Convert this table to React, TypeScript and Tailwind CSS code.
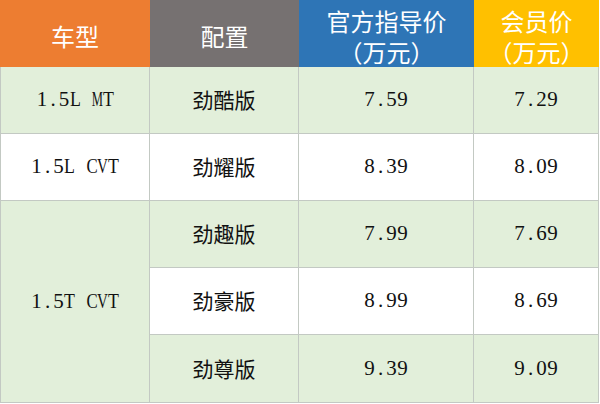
import React from 'react'

const cjk = { fontFamily: '"Noto Sans CJK SC", "Noto Sans", sans-serif' }
const serif = { fontFamily: '"Liberation Serif", "Noto Sans CJK SC", serif' }

// SimSun-like half-width letters: every character gets the same slot,
// wide capitals are squeezed to fit it
const squeeze: Record<string, string> = {
  M: 'scale-x-[0.6]',
  V: 'scale-x-[0.72]',
  C: 'scale-x-[0.8]',
  T: 'scale-x-[0.85]',
  L: 'scale-x-[0.85]',
}

function Mono({ text }: { text: string }) {
  return (
    <span className="flex text-[21px] text-[#111]" style={serif}>
      {text.split('').map((ch, i) => (
        <span key={i} className="flex w-[11px] justify-center">
          <span className={`inline-block ${squeeze[ch] ?? ''}`}>{ch === ' ' ? '\u00a0' : ch}</span>
        </span>
      ))}
    </span>
  )
}

const cell = 'flex items-center justify-center border-b border-r border-[#c3c9c3]'
const green = 'bg-[#e2efda]'

interface Row {
  trim: string
  guide: string
  member: string
  bg: string
}

const rows: Row[] = [
  { trim: '劲趣版', guide: '7.99', member: '7.69', bg: green },
  { trim: '劲豪版', guide: '8.99', member: '8.69', bg: 'bg-white' },
  { trim: '劲尊版', guide: '9.39', member: '9.09', bg: green },
]

export default function App() {
  return (
    <div className="h-[404px] w-[600px] bg-white">
      <div className="grid grid-cols-[150px_149px_175px_125px] grid-rows-[67px_67px_67px_67px_67px_68px]">
        <div className="flex items-center justify-center bg-[#ed7d31] pt-1 text-[24px] text-white" style={cjk}>
          车型
        </div>
        <div className="flex items-center justify-center bg-[#767171] pt-1 text-[24px] text-white" style={cjk}>
          配置
        </div>
        <div className="flex flex-col items-center justify-center bg-[#2e75b6] pt-1 text-[24px] leading-[31px] text-white" style={cjk}>
          <span>官方指导价</span>
          <span>（万元）</span>
        </div>
        <div className="flex flex-col items-center justify-center bg-[#ffc000] pt-1 text-[24px] leading-[31px] text-white" style={cjk}>
          <span>会员价</span>
          <span>（万元）</span>
        </div>

        <div className={`${cell} ${green} border-l`}>
          <Mono text="1.5L MT" />
        </div>
        <div className={`${cell} ${green} text-[21px] text-[#111]`} style={cjk}>
          劲酷版
        </div>
        <div className={`${cell} ${green}`}>
          <Mono text="7.59" />
        </div>
        <div className={`${cell} ${green}`}>
          <Mono text="7.29" />
        </div>

        <div className={`${cell} bg-white border-l`}>
          <Mono text="1.5L CVT" />
        </div>
        <div className={`${cell} bg-white text-[21px] text-[#111]`} style={cjk}>
          劲耀版
        </div>
        <div className={`${cell} bg-white`}>
          <Mono text="8.39" />
        </div>
        <div className={`${cell} bg-white`}>
          <Mono text="8.09" />
        </div>

        <div className={`${cell} ${green} row-span-3 border-l`}>
          <Mono text="1.5T CVT" />
        </div>
        {rows.map((r) => (
          <React.Fragment key={r.trim}>
            <div className={`${cell} ${r.bg} text-[21px] text-[#111]`} style={cjk}>
              {r.trim}
            </div>
            <div className={`${cell} ${r.bg}`}>
              <Mono text={r.guide} />
            </div>
            <div className={`${cell} ${r.bg}`}>
              <Mono text={r.member} />
            </div>
          </React.Fragment>
        ))}
      </div>
    </div>
  )
}
